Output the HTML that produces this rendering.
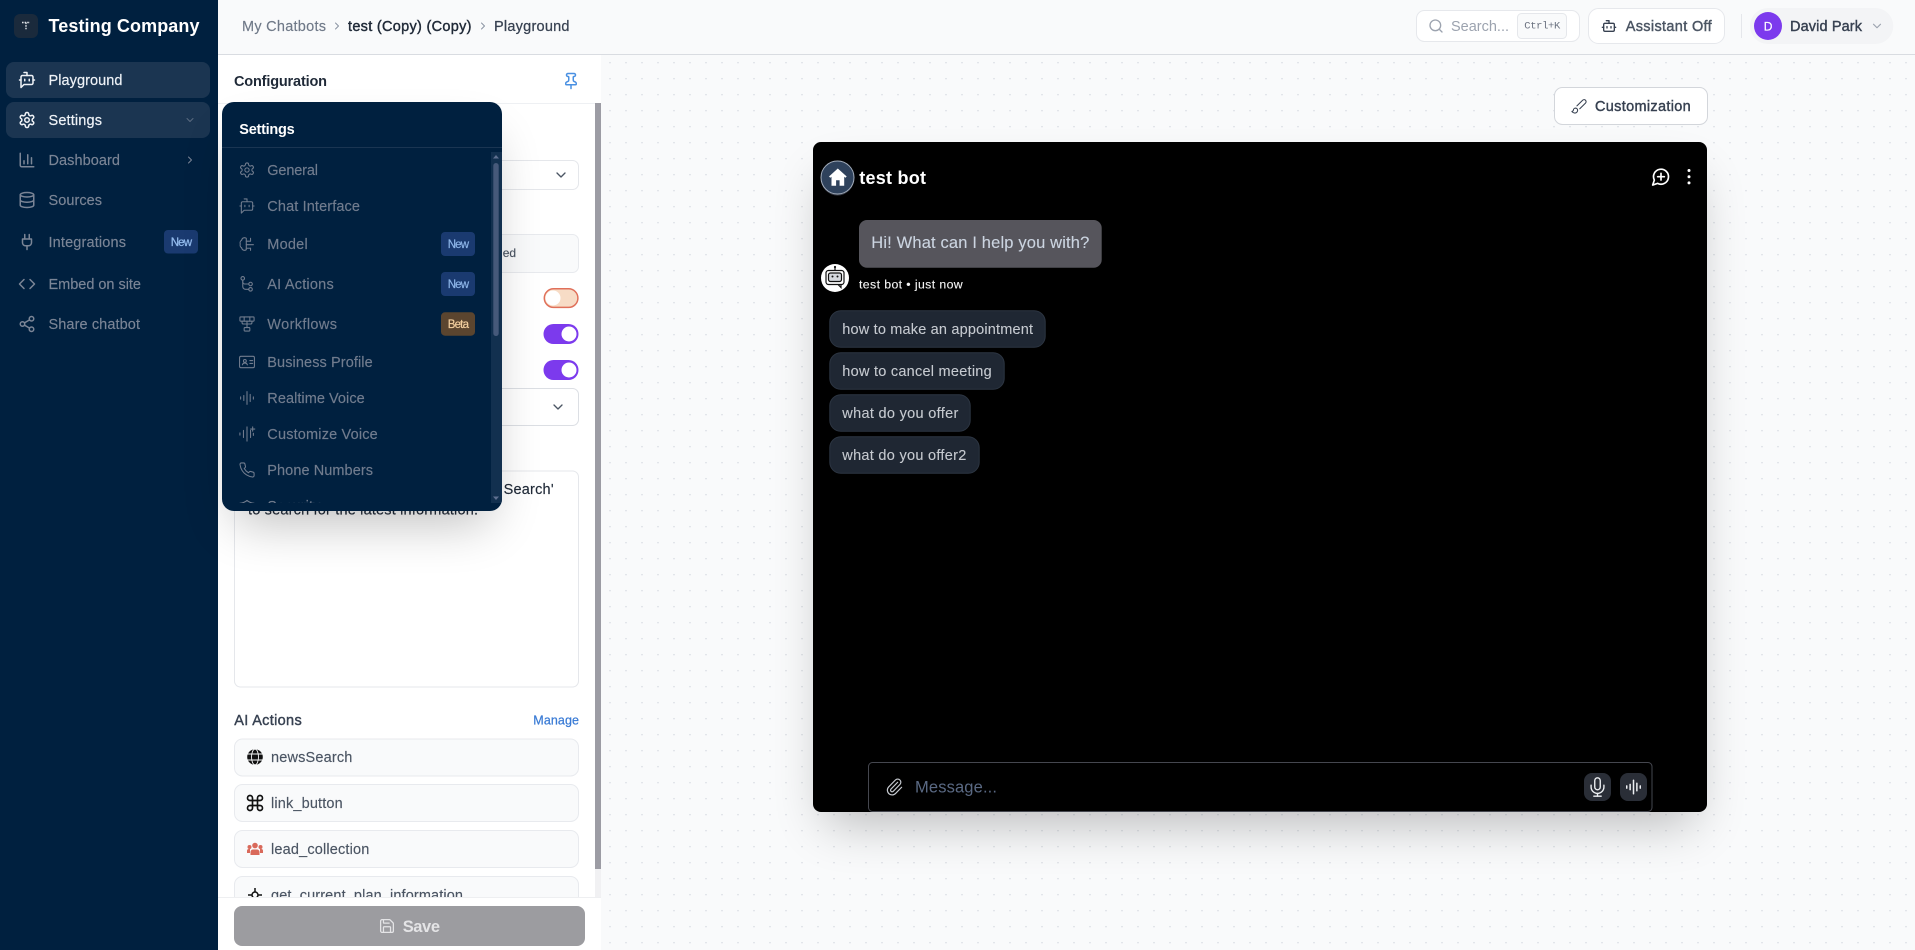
<!DOCTYPE html>
<html lang="en">
<head>
<meta charset="utf-8">
<title>Playground</title>
<style>
html,body{margin:0;padding:0;background:#f9fafb;overflow:hidden}
svg{display:block}
text{font-family:"Liberation Sans",Arial,sans-serif;font-size:14.5px}
.b{font-weight:700}
.nav{fill:#7b8596;stroke:#7b8596;stroke-width:.15px}
.pop{fill:#717c8e;stroke:#717c8e;stroke-width:.15px}
.row{fill:#4b5563;stroke:#4b5563;stroke-width:.15px}
.sug{fill:#c6cad0;stroke:#c6cad0;stroke-width:.1px}
.ic{fill:none;stroke-width:2;stroke-linecap:round;stroke-linejoin:round}
</style>
</head>
<body>
<svg xmlns="http://www.w3.org/2000/svg" width="1915" height="950" viewBox="0 0 1915 950">
<defs>
<pattern id="dots" patternUnits="userSpaceOnUse" x="601" y="54" width="16" height="16"><circle cx="9" cy="8.67" r=".85" fill="#dcdfe5"/></pattern>
<filter id="sh" filterUnits="userSpaceOnUse" x="0" y="0" width="1915" height="950"><feGaussianBlur stdDeviation="25"/></filter>
<clipPath id="popclip"><rect x="222" y="102" width="280" height="409" rx="12"/></clipPath>
<clipPath id="listclip"><rect x="222" y="148" width="269" height="355"/></clipPath>
<symbol id="botmsg" viewBox="0 0 24 24"><path d="M12 6V2H8"/><path d="m8 18-4 4V8a2 2 0 0 1 2-2h12a2 2 0 0 1 2 2v8a2 2 0 0 1-2 2Z"/><path d="M2 12h2"/><path d="M9 11v2"/><path d="M15 11v2"/><path d="M20 12h2"/></symbol>
<symbol id="gear" viewBox="0 0 24 24"><path d="M12.22 2h-.44a2 2 0 0 0-2 2v.18a2 2 0 0 1-1 1.73l-.43.25a2 2 0 0 1-2 0l-.15-.08a2 2 0 0 0-2.73.73l-.22.38a2 2 0 0 0 .73 2.73l.15.1a2 2 0 0 1 1 1.72v.51a2 2 0 0 1-1 1.74l-.15.09a2 2 0 0 0-.73 2.73l.22.38a2 2 0 0 0 2.73.73l.15-.08a2 2 0 0 1 2 0l.43.25a2 2 0 0 1 1 1.73V20a2 2 0 0 0 2 2h.44a2 2 0 0 0 2-2v-.18a2 2 0 0 1 1-1.73l.43-.25a2 2 0 0 1 2 0l.15.08a2 2 0 0 0 2.73-.73l.22-.39a2 2 0 0 0-.73-2.73l-.15-.08a2 2 0 0 1-1-1.74v-.5a2 2 0 0 1 1-1.74l.15-.09a2 2 0 0 0 .73-2.73l-.22-.38a2 2 0 0 0-2.73-.73l-.15.08a2 2 0 0 1-2 0l-.43-.25a2 2 0 0 1-1-1.73V4a2 2 0 0 0-2-2z"/><circle cx="12" cy="12" r="3"/></symbol>
<symbol id="chart" viewBox="0 0 24 24"><path d="M3 3v16a2 2 0 0 0 2 2h16"/><path d="M8 17v-4"/><path d="M13 17V5"/><path d="M18 17V9"/></symbol>
<symbol id="db" viewBox="0 0 24 24"><ellipse cx="12" cy="5" rx="9" ry="3"/><path d="M3 5V19A9 3 0 0 0 21 19V5"/><path d="M3 12A9 3 0 0 0 21 12"/></symbol>
<symbol id="plug" viewBox="0 0 24 24"><path d="M12 22v-5"/><path d="M9 8V2"/><path d="M15 8V2"/><path d="M18 8v5a4 4 0 0 1-4 4h-4a4 4 0 0 1-4-4V8Z"/></symbol>
<symbol id="code" viewBox="0 0 24 24"><path d="m16 18 6-6-6-6"/><path d="m8 6-6 6 6 6"/></symbol>
<symbol id="share" viewBox="0 0 24 24"><circle cx="18" cy="5" r="3"/><circle cx="6" cy="12" r="3"/><circle cx="18" cy="19" r="3"/><path d="m8.59 13.51 6.83 3.98"/><path d="m15.41 6.51-6.82 3.98"/></symbol>
<symbol id="chevd" viewBox="0 0 24 24"><path d="m6 9 6 6 6-6"/></symbol>
<symbol id="chevr" viewBox="0 0 24 24"><path d="m9 18 6-6-6-6"/></symbol>
<symbol id="pin" viewBox="0 0 24 24"><path d="M12 17v5"/><path d="M9 10.76a2 2 0 0 1-1.11 1.79l-1.78.9A2 2 0 0 0 5 15.24V16a1 1 0 0 0 1 1h12a1 1 0 0 0 1-1v-.76a2 2 0 0 0-1.11-1.79l-1.78-.9A2 2 0 0 1 15 10.76V7a1 1 0 0 1 1-1 2 2 0 0 0 0-4H8a2 2 0 0 0 0 4 1 1 0 0 1 1 1z"/></symbol>
<symbol id="search" viewBox="0 0 24 24"><circle cx="11" cy="11" r="8"/><path d="m21 21-4.3-4.3"/></symbol>
<symbol id="bot" viewBox="0 0 24 24"><path d="M12 8V4H8"/><rect width="16" height="12" x="4" y="8" rx="2"/><path d="M2 14h2"/><path d="M20 14h2"/><path d="M15 13v2"/><path d="M9 13v2"/></symbol>
<symbol id="brush" viewBox="0 0 24 24"><path d="m9.06 11.9 8.07-8.06a2.85 2.85 0 1 1 4.03 4.03l-8.06 8.08"/><path d="M7.07 14.94c-1.66 0-3 1.35-3 3.02 0 1.33-2.5 1.52-2 2.02 1.08 1.1 2.49 2.02 4 2.02 2.2 0 4-1.8 4-4.04a3.01 3.01 0 0 0-3-3.02z"/></symbol>
<symbol id="msgplus" viewBox="0 0 24 24"><path d="M7.9 20A9 9 0 1 0 4 16.1L2 22Z"/><path d="M8 12h8"/><path d="M12 8v8"/></symbol>
<symbol id="save" viewBox="0 0 24 24"><path d="M15.2 3a2 2 0 0 1 1.4.6l3.8 3.8a2 2 0 0 1 .6 1.4V19a2 2 0 0 1-2 2H5a2 2 0 0 1-2-2V5a2 2 0 0 1 2-2z"/><path d="M17 21v-7a1 1 0 0 0-1-1H8a1 1 0 0 0-1 1v7"/><path d="M7 3v4a1 1 0 0 0 1 1h7"/></symbol>
<symbol id="clip" viewBox="0 0 24 24"><path d="M13.234 20.252 21 12.3"/><path d="m16 6-8.414 8.586a2 2 0 0 0 0 2.828 2 2 0 0 0 2.828 0l8.414-8.586a4 4 0 0 0 0-5.656 4 4 0 0 0-5.656 0l-8.415 8.585a6 6 0 1 0 8.486 8.486"/></symbol>
<symbol id="mic" viewBox="0 0 24 24"><path d="M12 2a3 3 0 0 0-3 3v7a3 3 0 0 0 6 0V5a3 3 0 0 0-3-3Z"/><path d="M19 10v2a7 7 0 0 1-14 0v-2"/><path d="M12 19v3"/><path d="M8 22h8"/></symbol>
<symbol id="wave" viewBox="0 0 24 24"><path d="M3 10.5v3"/><path d="M7.500 8.500v7"/><path d="M12 3v18"/><path d="M16.500 7v10"/><path d="M21 10.500v3"/></symbol>
<symbol id="wavestar" viewBox="0 0 24 24"><path d="M2 10.500v3"/><path d="M7 7v10"/><path d="M12 2v20"/><path d="M17 7v10"/><path d="M21 11v3"/><path d="M20 2v6"/><path d="M17 5h6"/></symbol>
<symbol id="cmd" viewBox="0 0 24 24"><path d="M15 6v12a3 3 0 1 0 3-3H6a3 3 0 1 0 3 3V6a3 3 0 1 0-3 3h12a3 3 0 1 0-3-3"/></symbol>
<symbol id="phone" viewBox="0 0 24 24"><path d="M22 16.920v3a2 2 0 0 1-2.180 2 19.790 19.790 0 0 1-8.630-3.070 19.500 19.500 0 0 1-6-6 19.790 19.790 0 0 1-3.070-8.670A2 2 0 0 1 4.110 2h3a2 2 0 0 1 2 1.720 12.840 12.840 0 0 0 .7 2.810 2 2 0 0 1-.45 2.110L8.090 9.910a16 16 0 0 0 6 6l1.270-1.270a2 2 0 0 1 2.110-.45 12.840 12.840 0 0 0 2.810.7A2 2 0 0 1 22 16.920z"/></symbol>
<symbol id="brain" viewBox="0 0 24 24"><path d="M11 4a4 4 0 0 0-6.500 2.500A4.500 4.500 0 0 0 2.500 12a4.500 4.500 0 0 0 2 5.500A4 4 0 0 0 11 20z"/><path d="M11 8h6"/><path d="M11 13h10"/><path d="M11 18h6"/><path d="M17 8V4"/><path d="M17 18v3"/></symbol>
<symbol id="route" viewBox="0 0 24 24"><circle cx="6" cy="4" r="2.500"/><circle cx="17" cy="12" r="2.500"/><circle cx="17" cy="19.500" r="2.500"/><path d="M6 6.500v9a4 4 0 0 0 4 4h4.500"/><path d="M6 9a3 3 0 0 0 3 3h5.500"/></symbol>
<symbol id="flow" viewBox="0 0 24 24"><rect x="2" y="2" width="20" height="6" rx="1"/><path d="M8 2v6"/><path d="M16 2v6"/><path d="M5 8v2a2 2 0 0 0 2 2h10a2 2 0 0 0 2-2V8"/><path d="M12 8v9"/><rect x="8" y="17" width="8" height="5" rx="1"/></symbol>
<symbol id="idcard" viewBox="0 0 24 24"><rect x="1.500" y="4" width="21" height="16" rx="2"/><circle cx="9" cy="10.500" r="2"/><path d="M5.500 16c.5-2 2-2.500 3.500-2.500s3 .5 3.500 2.500"/><path d="M16 10h4"/><path d="M16 14h4"/></symbol>
<symbol id="shield" viewBox="0 0 24 24"><path d="M2 6c4 0 7-1.500 10-4 3 2.500 6 4 10 4v7c0 5-4 8-10 10-6-2-10-5-10-10z"/></symbol>
</defs>

<!-- page background -->
<rect x="0" y="0" width="1915" height="950" fill="#f9fafb"/>
<rect x="601" y="54" width="1314" height="896" fill="url(#dots)"/>

<!-- chat shadow -->
<rect x="825" y="179" width="870" height="645" fill="#000" opacity=".25" filter="url(#sh)"/>
<!-- header -->
<rect x="218" y="0" width="1697" height="54" fill="#f9fafb"/>
<rect x="218" y="54" width="1697" height="1" fill="#d9dce1"/>
<text x="242" y="31" textLength="84" fill="#6f7988" stroke="#6f7988" stroke-width=".15">My Chatbots</text>
<use href="#chevr" x="331" y="20" width="12" height="12" class="ic" stroke="#8a93a1"/>
<text x="348" y="31" textLength="123.500" fill="#1f2937" stroke="#1f2937" stroke-width=".4">test (Copy) (Copy)</text>
<use href="#chevr" x="477" y="20" width="12" height="12" class="ic" stroke="#8a93a1"/>
<text x="494" y="31" textLength="75.500" fill="#374151" stroke="#374151" stroke-width=".25">Playground</text>

<!-- header right -->
<rect x="1416.500" y="10.500" width="163" height="31" rx="8" fill="#fff" stroke="#e6e8ec"/>
<use href="#search" x="1428" y="18" width="16" height="16" class="ic" stroke="#9ca3af"/>
<text x="1451" y="31" textLength="58" fill="#9ca3af">Search...</text>
<rect x="1517.500" y="13.500" width="49" height="25" rx="4" fill="#f9fafb" stroke="#e5e7eb"/>
<text x="1524.300" y="28.500" textLength="36" fill="#6b7280" style="font-family:'Liberation Mono',monospace;font-size:10.500px">Ctrl+K</text>
<rect x="1588.500" y="8.500" width="136" height="35" rx="10" fill="#fff" stroke="#e6e8ec"/>
<use href="#bot" x="1601" y="18" width="16" height="16" class="ic" stroke="#374151"/>
<text x="1625.700" y="31" textLength="86" fill="#4b5563" stroke="#4b5563" stroke-width=".4">Assistant Off</text>
<rect x="1741" y="14" width="1" height="24" fill="#e5e7eb"/>
<rect x="1750" y="8" width="143.300" height="36" rx="18" fill="#f3f4f6"/>
<circle cx="1768" cy="26" r="14" fill="#7c3aed"/>
<text x="1763.700" y="30.300" textLength="8.600" fill="#fff" stroke="#fff" stroke-width=".2" style="font-size:12px">D</text>
<text x="1790" y="31" textLength="72" fill="#374151" stroke="#374151" stroke-width=".4">David Park</text>
<use href="#chevd" x="1870" y="19" width="14" height="14" class="ic" stroke="#9ca3af"/>

<!-- customization -->
<rect x="1554.500" y="87.500" width="153" height="37" rx="8" fill="#fff" stroke="#d3d6db"/>
<use href="#brush" x="1570.500" y="97.500" width="17" height="17" class="ic" stroke="#374151" style="stroke-width:1.500"/>
<text x="1595" y="111" textLength="95.700" fill="#374151" stroke="#374151" stroke-width=".4">Customization</text>

<!-- chat window -->
<rect x="813" y="142" width="894" height="670" rx="8" fill="#000"/>
<circle cx="837.500" cy="179" r="16.500" fill="#3a3f4c"/>
<circle cx="837.500" cy="177.500" r="16.500" fill="#2f425c" stroke="#a3adbb" stroke-width="1"/>
<path d="M837.800 168.500 l-8.800 8 1.300 1.300 1.200-1 v9 h4.600 v-5.500 h3.500 v5.500 h4.600 v-9 l1.200 1 1.300-1.300z" fill="#fff"/>
<text x="859.300" y="183.800" textLength="66.700" fill="#fff" class="b" style="font-size:18px">test bot</text>
<use href="#msgplus" x="1651" y="166.700" width="20" height="20" class="ic" stroke="#fff"/>
<circle cx="1689" cy="170.500" r="1.500" fill="#fff"/><circle cx="1689" cy="176.700" r="1.500" fill="#fff"/><circle cx="1689" cy="182.900" r="1.500" fill="#fff"/>
<rect x="859" y="220" width="242.700" height="47.700" rx="8" fill="#56555c"/>
<text x="871.300" y="248" textLength="218" fill="#cbd4e0" stroke="#cbd4e0" stroke-width=".12" style="font-size:16.500px">Hi! What can I help you with?</text>
<circle cx="835" cy="278" r="14" fill="#fff"/>
<g fill="none" stroke="#111" stroke-width="1.200">
<rect x="826" y="270.500" width="18" height="14" rx="2.500"/>
<rect x="828.500" y="273" width="13" height="8.500" rx="2" fill="#d5d8dd"/>
<path d="M835 270.500v-3"/><path d="M838 284.500l3 3v-3"/>
</g>
<circle cx="835" cy="267" r="1.100" fill="#111"/><circle cx="832.500" cy="276.500" r="1" fill="#111"/><circle cx="837.500" cy="276.500" r="1" fill="#111"/>
<text x="859" y="288.300" textLength="103.700" fill="#f5f5f5" stroke="#f5f5f5" stroke-width=".12" style="font-size:12.300px">test bot • just now</text>

<rect x="829.800" y="310.800" width="215.400" height="36.500" rx="11" fill="#1f2733" stroke="#2c3542"/>
<text x="842.300" y="334" textLength="190.700" class="sug">how to make an appointment</text>
<rect x="829.800" y="352.800" width="174.400" height="36.500" rx="11" fill="#1f2733" stroke="#2c3542"/>
<text x="842.300" y="376" textLength="149.400" class="sug">how to cancel meeting</text>
<rect x="829.800" y="394.800" width="140.400" height="36.500" rx="11" fill="#1f2733" stroke="#2c3542"/>
<text x="842.300" y="418" textLength="116" class="sug">what do you offer</text>
<rect x="829.800" y="436.800" width="149.400" height="36.500" rx="11" fill="#1f2733" stroke="#2c3542"/>
<text x="842.300" y="460" textLength="124" class="sug">what do you offer2</text>

<rect x="868.500" y="762.500" width="783.500" height="49" rx="4" fill="#000" stroke="#45474f"/>
<use href="#clip" x="885" y="777.500" width="19" height="19" class="ic" stroke="#c6cad0" style="stroke-width:1.500"/>
<text x="915" y="792.500" textLength="82" fill="#5a6983" style="font-size:16.500px">Message...</text>
<rect x="1584" y="773" width="27" height="28" rx="8" fill="#2a2e37"/>
<use href="#mic" x="1586.500" y="776" width="22" height="22" class="ic" stroke="#eceef1" style="stroke-width:1.500"/>
<rect x="1620" y="773" width="27" height="28" rx="8" fill="#2a2e37"/>
<use href="#wave" x="1624.500" y="778" width="18" height="18" class="ic" stroke="#eceef1"/>

<!-- config panel -->
<rect x="218" y="55" width="383" height="895" fill="#fff"/>
<text x="234" y="86" textLength="93" fill="#1f2937" class="b">Configuration</text>
<use href="#pin" x="562" y="72" width="18" height="18" class="ic" stroke="#4a90e2"/>
<rect x="218" y="103" width="377" height="1" fill="#eef0f3"/>
<rect x="595" y="103" width="6" height="794" fill="#f1f1f3"/>
<rect x="595" y="103" width="6" height="766" fill="#9c9ca4"/>

<rect x="234.500" y="160.500" width="344" height="29" rx="6" fill="#fff" stroke="#e5e7eb"/>
<use href="#chevd" x="553" y="167" width="16" height="16" class="ic" stroke="#4b5563"/>
<rect x="234.500" y="234.500" width="344" height="38" rx="6" fill="#f9fafb" stroke="#e8eaee"/>
<text x="502.700" y="257" textLength="13.300" fill="#4b5563" stroke="#4b5563" stroke-width=".15" style="font-size:12px">ed</text>
<rect x="544.300" y="288.800" width="33.600" height="18.600" rx="9.300" fill="#f7dcc6" stroke="#e0705a" stroke-width="1.500"/>
<circle cx="553" cy="298" r="7.500" fill="#fff"/>
<rect x="543.500" y="324" width="35" height="20" rx="10" fill="#7c3aed"/>
<circle cx="569" cy="334" r="7.500" fill="#fff"/>
<rect x="543.500" y="360" width="35" height="20" rx="10" fill="#7c3aed"/>
<circle cx="569" cy="370" r="7.500" fill="#fff"/>
<rect x="234.500" y="388.500" width="344" height="37" rx="6" fill="#fff" stroke="#dcdfe4"/>
<use href="#chevd" x="550" y="399" width="16" height="16" class="ic" stroke="#4b5563"/>
<rect x="234.500" y="471" width="344" height="216" rx="6" fill="#fff" stroke="#e5e7eb"/>
<text x="503.600" y="494" textLength="50" fill="#1f2937" stroke="#1f2937" stroke-width=".15">Search'</text>
<text x="248" y="514.500" textLength="230" fill="#1f2937" stroke="#1f2937" stroke-width=".15">to search for the latest information.</text>

<text x="234.300" y="725" textLength="67.400" fill="#374151" stroke="#374151" stroke-width=".4">AI Actions</text>
<text x="533.300" y="724.500" textLength="45.700" fill="#3a7bd5" stroke="#3a7bd5" stroke-width=".25" style="font-size:12.500px">Manage</text>

<rect x="234.500" y="739" width="344" height="37" rx="8" fill="#f9fafb" stroke="#e8eaee"/>
<circle cx="255" cy="757" r="7.800" fill="#111"/>
<g fill="none" stroke="#f9fafb" stroke-width=".9"><ellipse cx="255" cy="757" rx="3.500" ry="7.800"/><path d="M247 754h16M247 760h16"/></g>
<text x="271" y="762" textLength="81.300" class="row">newsSearch</text>
<rect x="234.500" y="784.500" width="344" height="37" rx="8" fill="#f9fafb" stroke="#e8eaee"/>
<use href="#cmd" x="245" y="793" width="20" height="20" class="ic" stroke="#111"/>
<text x="271" y="808" textLength="71.700" class="row">link_button</text>
<rect x="234.500" y="830.500" width="344" height="37" rx="8" fill="#f9fafb" stroke="#e8eaee"/>
<g fill="#d9695a"><circle cx="255" cy="845.500" r="2.800"/><circle cx="249.500" cy="847" r="2"/><circle cx="260.500" cy="847" r="2"/><path d="M250.500 855v-3a2.500 2.500 0 0 1 2.500-2.500h4a2.500 2.500 0 0 1 2.500 2.500v3z"/><path d="M247 853v-2.500a1.800 1.800 0 0 1 1.800-1.500h1.200v4zM263 853v-2.500a1.800 1.800 0 0 0-1.800-1.500H260v4z"/></g>
<text x="271" y="854" textLength="98.300" class="row">lead_collection</text>
<rect x="234.500" y="876.500" width="344" height="37" rx="8" fill="#f9fafb" stroke="#e8eaee"/>
<g fill="none" stroke="#111" stroke-width="1.500"><circle cx="255" cy="895" r="3"/><path d="M255 888v4M255 898v4M248 895h4M258 895h4"/></g>
<text x="271" y="900" textLength="192" class="row">get_current_plan_information</text>

<!-- footer -->
<rect x="218" y="897" width="383" height="53" fill="#fff"/>
<rect x="218" y="897" width="383" height="1" fill="#eeeff1"/>
<rect x="234" y="906" width="351" height="40" rx="8" fill="#9c9ca0"/>
<use href="#save" x="378.500" y="917.500" width="17" height="17" class="ic" stroke="#e4e4e6" style="stroke-width:1.800"/>
<text x="402.700" y="932" textLength="37.300" fill="#e4e4e6" class="b" style="font-size:16.500px">Save</text>

<!-- sidebar -->
<rect x="0" y="0" width="218" height="950" fill="#00203f"/>
<rect x="14" y="14" width="24" height="24" rx="6" fill="#1a2a3c"/>
<path d="M22 22.500h8M26 22.500v7" stroke="#dfe3e8" stroke-width="1.400" stroke-dasharray="1.600 1" fill="none"/>
<text x="48.500" y="32" textLength="151" fill="#fff" class="b" style="font-size:18px">Testing Company</text>

<rect x="6" y="62" width="204" height="36" rx="8" fill="#1b3551"/>
<use href="#botmsg" x="18" y="71" width="18" height="18" class="ic" stroke="#f0f3f7"/>
<text x="48.500" y="85" textLength="74" fill="#eef2f7" stroke="#eef2f7" stroke-width=".2">Playground</text>
<rect x="6" y="102" width="204" height="36" rx="8" fill="#1b3551"/>
<use href="#gear" x="18" y="111" width="18" height="18" class="ic" stroke="#f0f3f7"/>
<text x="48.500" y="125" textLength="53.500" fill="#eef2f7" stroke="#eef2f7" stroke-width=".2">Settings</text>
<use href="#chevd" x="184" y="114" width="12" height="12" class="ic" stroke="#5b6b80"/>

<use href="#chart" x="18" y="151" width="18" height="18" class="ic" stroke="#7b8596"/>
<text x="48.500" y="165" textLength="71.500" class="nav">Dashboard</text>
<use href="#chevr" x="184" y="154" width="12" height="12" class="ic" stroke="#7b8596"/>
<use href="#db" x="18" y="191" width="18" height="18" class="ic" stroke="#7b8596"/>
<text x="48.500" y="205" textLength="53.500" class="nav">Sources</text>
<use href="#plug" x="18" y="233" width="18" height="18" class="ic" stroke="#7b8596"/>
<text x="48.500" y="247" textLength="77.500" class="nav">Integrations</text>
<rect x="164" y="230" width="34" height="23.500" rx="4" fill="#1a3a70"/>
<text x="170.700" y="246" textLength="21.300" fill="#93bbee" stroke="#93bbee" stroke-width=".25" style="font-size:11.500px">New</text>
<use href="#code" x="18" y="275" width="18" height="18" class="ic" stroke="#7b8596"/>
<text x="48.500" y="289" textLength="92.500" class="nav">Embed on site</text>
<use href="#share" x="18" y="315" width="18" height="18" class="ic" stroke="#7b8596"/>
<text x="48.500" y="329" textLength="91.500" class="nav">Share chatbot</text>

<!-- popup -->
<rect x="234" y="139" width="256" height="384" rx="12" fill="#000" opacity=".25" filter="url(#sh)"/>
<g clip-path="url(#popclip)">
<rect x="222" y="102" width="280" height="409" fill="#00203f"/>
<rect x="222" y="147" width="280" height="1" fill="#1a3552"/>
<text x="239.300" y="134" textLength="55.400" fill="#fff" class="b">Settings</text>
<rect x="491" y="152" width="11" height="351" fill="#12304f"/>
<rect x="493.300" y="163" width="5.400" height="173" rx="2.700" fill="#46597a"/>
<path d="M496 155l-3 3.500h6z" fill="#5f7090"/>
<path d="M496 500l-3-3.500h6z" fill="#5f7090"/>
<g clip-path="url(#listclip)">
<use href="#gear" x="238.500" y="161.500" width="17" height="17" class="ic" stroke="#717c8e" style="stroke-width:1.500"/>
<text x="267.300" y="175" textLength="50.700" class="pop">General</text>
<use href="#botmsg" x="238.500" y="197.500" width="17" height="17" class="ic" stroke="#717c8e" style="stroke-width:1.500"/>
<text x="267.300" y="211" textLength="92.700" class="pop">Chat Interface</text>
<use href="#brain" x="238.500" y="235.500" width="17" height="17" class="ic" stroke="#717c8e" style="stroke-width:1.500"/>
<text x="267.300" y="249" textLength="40.400" class="pop">Model</text>
<rect x="441" y="232" width="34" height="24" rx="4" fill="#1a3a70"/>
<text x="447.700" y="248" textLength="21.300" fill="#8db5e8" stroke="#8db5e8" stroke-width=".2" style="font-size:11.500px">New</text>
<use href="#route" x="238.500" y="275.500" width="17" height="17" class="ic" stroke="#717c8e" style="stroke-width:1.500"/>
<text x="267.300" y="289" textLength="66.400" class="pop">AI Actions</text>
<rect x="441" y="272" width="34" height="24" rx="4" fill="#1a3a70"/>
<text x="447.700" y="288" textLength="21.300" fill="#8db5e8" stroke="#8db5e8" stroke-width=".2" style="font-size:11.500px">New</text>
<use href="#flow" x="238.500" y="315.500" width="17" height="17" class="ic" stroke="#717c8e" style="stroke-width:1.500"/>
<text x="267.300" y="329" textLength="69.700" class="pop">Workflows</text>
<rect x="441" y="312.300" width="34" height="23.400" rx="4" fill="#5b452f"/>
<text x="447.700" y="328" textLength="21.300" fill="#f3cf9f" stroke="#f3cf9f" stroke-width=".2" style="font-size:11.500px">Beta</text>
<use href="#idcard" x="238.500" y="353.500" width="17" height="17" class="ic" stroke="#717c8e" style="stroke-width:1.500"/>
<text x="267.300" y="367" textLength="105.400" class="pop">Business Profile</text>
<use href="#wave" x="238.500" y="389.500" width="17" height="17" class="ic" stroke="#717c8e" style="stroke-width:1.500"/>
<text x="267.300" y="403" textLength="97.400" class="pop">Realtime Voice</text>
<use href="#wavestar" x="238.500" y="425.500" width="17" height="17" class="ic" stroke="#717c8e" style="stroke-width:1.500"/>
<text x="267.300" y="439" textLength="110.400" class="pop">Customize Voice</text>
<use href="#phone" x="238.500" y="461.500" width="17" height="17" class="ic" stroke="#717c8e" style="stroke-width:1.500"/>
<text x="267.300" y="475" textLength="105.700" class="pop">Phone Numbers</text>
<use href="#shield" x="238.500" y="499" width="17" height="17" class="ic" stroke="#717c8e" style="stroke-width:1.500"/>
<text x="267.300" y="511" textLength="53" class="pop">Security</text>
</g>
</g>
</svg>
</body>
</html>
